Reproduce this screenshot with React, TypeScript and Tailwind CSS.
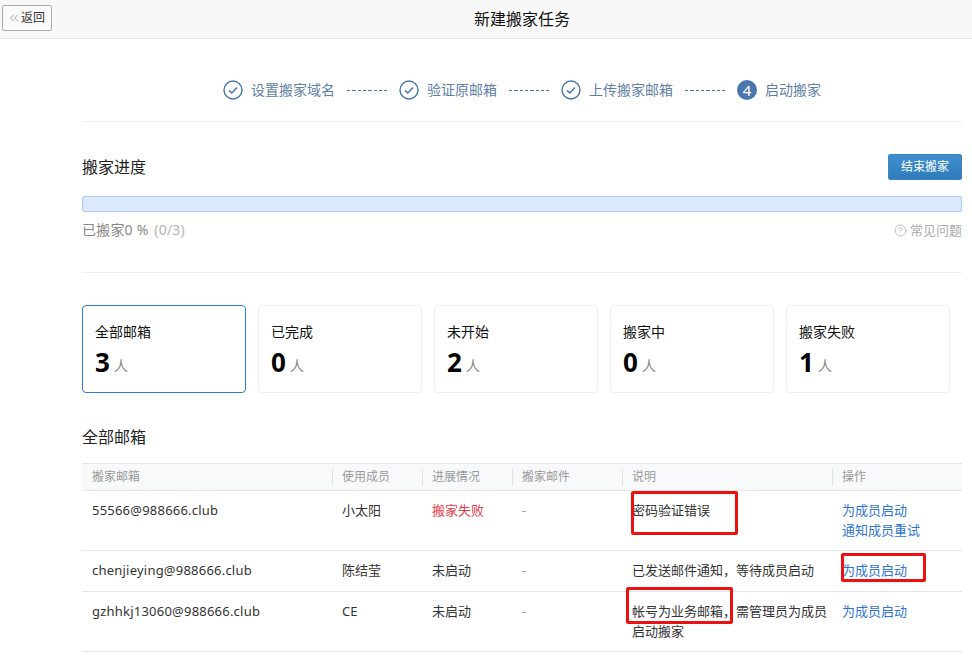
import { ChevronsLeft, CircleHelp } from "lucide-react";

const steps = [
  { label: "设置搬家域名", done: true },
  { label: "验证原邮箱", done: true },
  { label: "上传搬家邮箱", done: true },
  { label: "启动搬家", done: false },
];

const stats = [
  { label: "全部邮箱", count: 3, active: true },
  { label: "已完成", count: 0, active: false },
  { label: "未开始", count: 2, active: false },
  { label: "搬家中", count: 0, active: false },
  { label: "搬家失败", count: 1, active: false },
];

const columns = ["搬家邮箱", "使用成员", "进展情况", "搬家邮件", "说明", "操作"];

const rows = [
  {
    email: "55566@988666.club",
    member: "小太阳",
    status: "搬家失败",
    failed: true,
    note: "密码验证错误",
    actions: ["为成员启动", "通知成员重试"],
  },
  {
    email: "chenjieying@988666.club",
    member: "陈结莹",
    status: "未启动",
    failed: false,
    note: "已发送邮件通知，等待成员启动",
    actions: ["为成员启动"],
  },
  {
    email: "gzhhkj13060@988666.club",
    member: "CE",
    status: "未启动",
    failed: false,
    note: "帐号为业务邮箱，需管理员为成员启动搬家",
    actions: ["为成员启动"],
  },
];

const gridCols = "grid grid-cols-[250px_90px_90px_110px_210px_1fr]";

function StepIcon({ index, done }: { index: number; done: boolean }) {
  if (!done) {
    return (
      <span className="flex h-5 w-5 items-center justify-center rounded-full bg-[#4a76ad] text-[15px] leading-5 text-white">
        {index}
      </span>
    );
  }
  return (
    <svg width="20" height="20" viewBox="0 0 20 20" fill="none" stroke="#4a76ad">
      <circle cx="10" cy="10" r="9" strokeWidth="1.4" />
      <path d="M6 10.4l2.8 2.6L14 7.6" strokeWidth="1.5" />
    </svg>
  );
}

function StepDash() {
  return (
    <svg width="40" height="2" viewBox="0 0 40 2" className="mx-3" shapeRendering="crispEdges">
      <line x1="0" y1="1.5" x2="40" y2="1.5" stroke="#4a76ad" strokeWidth="1" strokeDasharray="3.4 1.9" />
    </svg>
  );
}

export default function App() {
  return (
    <div className="h-[664px] w-[972px] overflow-hidden bg-white font-['Noto_Sans','Noto_Sans_CJK_SC',sans-serif] text-black relative">
      <header className="relative flex h-[39px] items-center justify-center border-b border-[#e5e5e5] bg-[#f8f8f8] pl-[72px]">
        <button className="absolute left-[2px] top-[5px] flex h-[26px] w-[50px] items-center justify-center rounded-[2px] border border-[#aaaaaa] bg-[#fafafa] pr-[2px] text-[12px] text-[#333333]">
          <ChevronsLeft size={14} strokeWidth={1} className="text-[#666666]" />
          返回
        </button>
        <h1 className="text-[16px] font-normal leading-6 text-[#111111]">新建搬家任务</h1>
      </header>

      <main className="pl-[82px] pr-[10px]">
        <div className="border-b border-[#eeeeee] pt-[41px] pb-[21px]">
          <div className="flex h-5 items-center justify-center">
            {steps.map((step, i) => (
              <div key={step.label} className="flex items-center">
                <StepIcon index={i + 1} done={step.done} />
                <span className="ml-2 text-[14px] leading-5 text-[#5f7fa6]">{step.label}</span>
                {i < steps.length - 1 && <StepDash />}
              </div>
            ))}
          </div>
        </div>

        <section className="border-b border-[#eeeeee] pt-8 pb-8">
          <div className="flex h-[26px] items-center justify-between">
            <h2 className="text-[16px] font-normal leading-6 text-[#222222]">搬家进度</h2>
            <button className="h-[26px] w-[74px] rounded-[2px] border border-[#3a86c4] bg-gradient-to-b from-[#3f90d0] to-[#2f7bb8] text-[12px] text-white">
              结束搬家
            </button>
          </div>
          <div className="mt-4 h-4 rounded-[2px] border border-[#a9cbf3] bg-[#dbe9fb]" />
          <div className="mt-2 flex h-5 items-center justify-between text-[14px] leading-5 text-[#888888]">
            <span className="tracking-[0.2px]">
              已搬家0 % <span className="ml-[2px] text-[#b5b5b5]">(0/3)</span>
            </span>
            <span className="flex items-center gap-[3px] text-[13px] text-[#aaaaaa]">
              <CircleHelp size={13} strokeWidth={1.4} />
              常见问题
            </span>
          </div>
        </section>

        <section className="grid grid-cols-5 gap-3 pt-8 pr-3">
          {stats.map((stat) => (
            <div
              key={stat.label}
              className={`h-[88px] rounded-[4px] border px-3 pt-4 ${
                stat.active ? "border-[#2f7ad6]" : "border-[#eeeeee]"
              }`}
            >
              <div className="text-[14px] leading-5 text-[#111111]">{stat.label}</div>
              <div className="mt-1 flex items-end gap-1">
                <span className="text-[26px] font-bold leading-8">{stat.count}</span>
                <span className="mb-[2px] text-[14px] leading-5 text-[#888888]">人</span>
              </div>
            </div>
          ))}
        </section>

        <h2 className="mt-8 text-[16px] font-normal leading-6 text-[#222222]">全部邮箱</h2>

        <div className="mt-[14px]">
          <div className={`${gridCols} h-[28px] items-center border-y border-[#e4e6eb] bg-[#f8f9fb]`}>
            {columns.map((col, i) => (
              <div
                key={col}
                className={`h-[18px] text-[12px] leading-[18px] text-[#999999] ${
                  i > 0 ? "border-l border-[#e2e2e2] pl-[9px]" : "pl-[10px]"
                }`}
              >
                {col}
              </div>
            ))}
          </div>
          {rows.map((row) => (
            <div
              key={row.email}
              className={`${gridCols} min-h-[41px] border-b border-[#e6e6e6] pt-[9px] pb-[10px] text-[13px] leading-5 text-[#333333]`}
            >
              <div className="pl-[10px] tracking-[0.22px]">{row.email}</div>
              <div className="pl-[10px]">{row.member}</div>
              <div className={`pl-[10px] ${row.failed ? "text-[#e8404a]" : ""}`}>{row.status}</div>
              <div className="pl-[10px] text-[#999999]">-</div>
              <div className="pl-[10px]">{row.note}</div>
              <div className="pl-[10px] text-[#2f74d0]">
                {row.actions.map((action) => (
                  <div key={action}>{action}</div>
                ))}
              </div>
            </div>
          ))}
        </div>
      </main>

      {/* annotation boxes drawn over the screenshot */}
      <div className="absolute left-[631px] top-[491px] h-[44px] w-[107px] rounded-[2px] border-[3px] border-[#ee1111]" />
      <div className="absolute left-[841px] top-[553px] h-[29px] w-[85px] rounded-[2px] border-[3px] border-[#ee1111]" />
      <div className="absolute left-[626px] top-[587px] h-[37px] w-[107px] rounded-[2px] border-[3px] border-[#ee1111]" />
    </div>
  );
}
